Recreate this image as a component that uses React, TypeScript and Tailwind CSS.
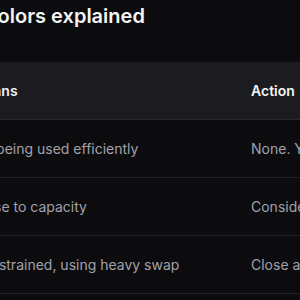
const rows = [
  { color: "Green", dot: "bg-[#22c55e]", means: "It's being used efficiently", action: "None. Your Mac is running smoothly." },
  { color: "Yellow", dot: "bg-[#eab308]", means: "Close to capacity", action: "Consider closing unused apps." },
  { color: "Red", dot: "bg-[#ef4444]", means: "Constrained, using heavy swap", action: "Close apps or add more memory." },
]

export default function App() {
  return (
    <div className="h-[300px] w-[300px] overflow-hidden bg-[#0c0c0f] font-['Inter',sans-serif]">
      <div className="-ml-[190px] w-[760px]">
        <h2 className="mt-[2px] text-xl leading-7 font-semibold text-[#f4f4f5]">
          Memory pressure colors explained
        </h2>

        <table className="mt-8 w-full border-collapse text-left text-sm leading-[25px]">
          <thead>
            <tr className="border-b border-[#27272c] bg-[#1c1c20]">
              <th className="w-[146px] px-4 py-4 font-semibold text-[#f4f4f5]">Color</th>
              <th className="w-[279px] px-4 py-4 font-semibold text-[#f4f4f5]">Means</th>
              <th className="px-4 py-4 font-semibold text-[#f4f4f5]">Action</th>
            </tr>
          </thead>
          <tbody>
            {rows.map((row) => (
              <tr key={row.color} className="border-b border-[#222226]">
                <td className="px-4 py-4 text-[#a1a1aa]">
                  <span className="flex items-center gap-2">
                    <span className={`h-2.5 w-2.5 rounded-full ${row.dot}`} />
                    {row.color}
                  </span>
                </td>
                <td className="px-4 py-4 whitespace-nowrap text-[#a1a1aa]">{row.means}</td>
                <td className="px-4 py-4 whitespace-nowrap text-[#a1a1aa]">{row.action}</td>
              </tr>
            ))}
          </tbody>
        </table>
      </div>
    </div>
  )
}
